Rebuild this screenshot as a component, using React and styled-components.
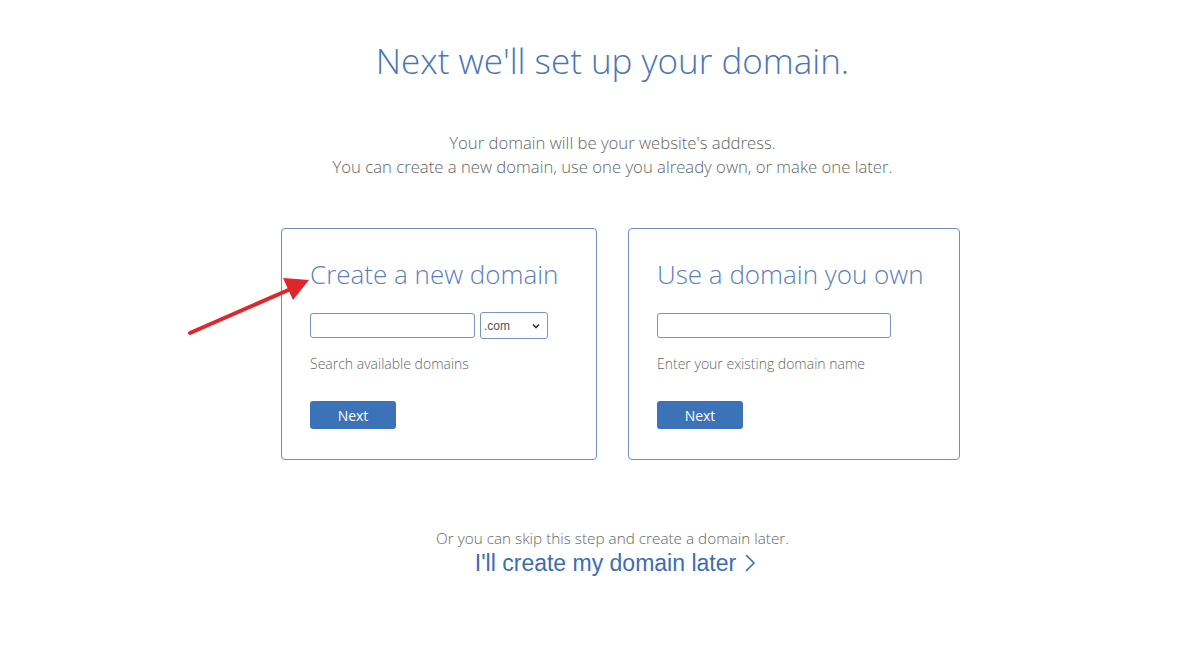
import styled, { createGlobalStyle } from "styled-components";

const GlobalStyle = createGlobalStyle`
  body {
    margin: 0;
    background: #ffffff;
    font-family: "Open Sans", "Liberation Sans", sans-serif;
  }
`;

const Page = styled.div`
  width: 1200px;
  height: 654px;
  display: flex;
  flex-direction: column;
  align-items: center;
  position: relative;
  padding-left: 25px;
  box-sizing: border-box;
`;

const Title = styled.h1`
  margin: 38px 0 0;
  font-size: 35px;
  font-weight: 300;
  line-height: 46px;
  color: #4a75b8;
`;

const Intro = styled.p`
  margin: 47px 0 0;
  font-size: 16.7px;
  font-weight: 300;
  line-height: 24px;
  color: #666;
  text-align: center;
`;

const Cards = styled.div`
  display: flex;
  gap: 31px;
  margin: 49px 0 0 16px;
`;

const Card = styled.div`
  width: ${(p) => p.w}px;
  height: 232px;
  box-sizing: border-box;
  border: 1px solid #6f8fc3;
  border-radius: 4px;
  padding: 25px 28px 0;
  display: flex;
  flex-direction: column;
`;

const CardTitle = styled.h2`
  margin: 0;
  font-size: 26px;
  font-weight: 300;
  line-height: 40px;
  color: #5b80bf;
`;

const FieldRow = styled.div`
  display: flex;
  align-items: center;
  gap: 5px;
  height: 27px;
  margin-top: 18px;
`;

const TextInput = styled.input`
  width: ${(p) => p.w}px;
  height: 25px;
  box-sizing: border-box;
  border: 1px solid #7893bf;
  border-radius: 3px;
  padding: 0 6px;
  font-size: 13px;
  outline: none;
`;

const SelectBox = styled.div`
  width: 68px;
  height: 27px;
  box-sizing: border-box;
  border: 1px solid #7893bf;
  border-radius: 3px;
  display: flex;
  align-items: center;
  justify-content: space-between;
  padding: 0 6px 0 3px;
  font-family: "Liberation Sans", Arial, sans-serif;
  font-size: 12px;
  color: #555;
`;

const Hint = styled.div`
  margin-top: 15px;
  font-size: 14px;
  font-weight: 300;
  line-height: 20px;
  color: #666;
`;

const NextButton = styled.button`
  margin-top: 27px;
  width: 86px;
  height: 28px;
  border: none;
  border-radius: 3px;
  background: #3c72b8;
  color: #fff;
  font-family: "Open Sans", sans-serif;
  font-size: 14px;
  cursor: pointer;
`;

const Skip = styled.div`
  margin-top: 68px;
  font-size: 15.3px;
  font-weight: 300;
  color: #666;
  line-height: 20px;
`;

const LaterLink = styled.a`
  margin: 1px 0 0 6px;
  font-family: "Liberation Sans", Arial, sans-serif;
  font-size: 23px;
  line-height: 28px;
  color: #3b6db4;
  text-decoration: none;
  display: flex;
  align-items: center;
  gap: 8px;
`;

const Arrow = styled.svg`
  position: absolute;
  left: 185px;
  top: 272px;
`;

const Chevron = ({ size = 10, stroke = "#333", w = 1.6 }) => (
  <svg width={size} height={size} viewBox="0 0 10 10">
    <path d="M2 3.5 L5 6.5 L8 3.5" fill="none" stroke={stroke} strokeWidth={w} />
  </svg>
);

export default function App() {
  return (
    <Page>
      <GlobalStyle />
      <Title>Next we'll set up your domain.</Title>
      <Intro>
        Your domain will be your website's address.
        <br />
        You can create a new domain, use one you already own, or make one later.
      </Intro>
      <Cards>
        <Card w={316}>
          <CardTitle>Create a new domain</CardTitle>
          <FieldRow>
            <TextInput w={165} />
            <SelectBox>
              .com
              <Chevron />
            </SelectBox>
          </FieldRow>
          <Hint>Search available domains</Hint>
          <div>
            <NextButton>Next</NextButton>
          </div>
        </Card>
        <Card w={332}>
          <CardTitle>Use a domain you own</CardTitle>
          <FieldRow>
            <TextInput w={234} />
          </FieldRow>
          <Hint>Enter your existing domain name</Hint>
          <div>
            <NextButton>Next</NextButton>
          </div>
        </Card>
      </Cards>
      <Skip>Or you can skip this step and create a domain later.</Skip>
      <LaterLink href="#">
        I'll create my domain later
        <svg width="12" height="20" viewBox="0 0 12 20">
          <path d="M2 2 L10 10 L2 18" fill="none" stroke="#3b6db4" strokeWidth="1.6" />
        </svg>
      </LaterLink>
      <Arrow width="130" height="70" viewBox="0 0 130 70">
        <line x1="5" y1="61" x2="108" y2="16" stroke="#e0252b" strokeWidth="4" strokeLinecap="round" />
        <polygon points="124,8 98,6 108,28" fill="#e0252b" />
      </Arrow>
    </Page>
  );
}
